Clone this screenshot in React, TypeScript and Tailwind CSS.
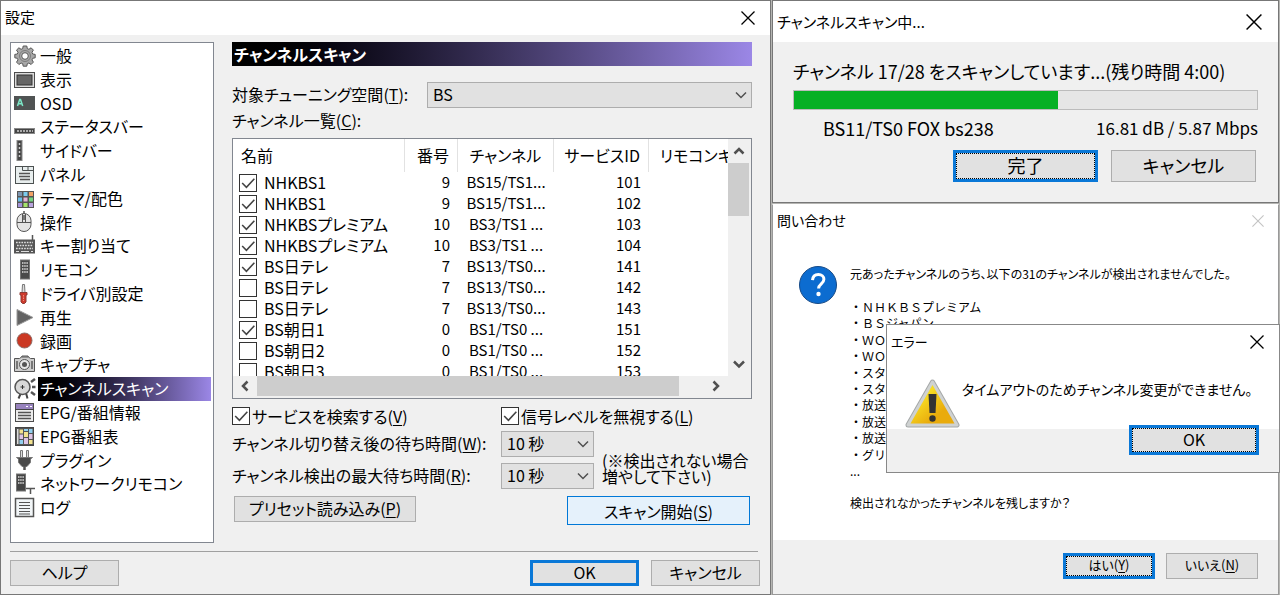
import { useState, type ReactNode } from "react";

const gray = "#555";

const icons: Record<string, ReactNode> = {
  general: (
    <>
      <g fill="#a8a8a8" stroke="#585858" strokeWidth="1">
        <path d="M9.2 1h3.6l.5 2.6 1.6.7 2.2-1.5 2.3 2.3-1.4 2.2.7 1.7 2.5.4v3.4l-2.5.5-.7 1.6 1.4 2.2-2.3 2.4-2.2-1.5-1.6.7-.5 2.5H9.2l-.5-2.5-1.6-.7-2.2 1.5-2.4-2.4L4 14.9l-.7-1.6-2.5-.5V9.4L3.300 9 4 7.300 2.500 5.100l2.400-2.300 2.200 1.500 1.600-.7z" />
        <circle cx="11" cy="11" r="3.300" fill="#fff" />
      </g>
      <circle cx="11" cy="11" r="5.500" fill="none" stroke="#7c7c7c" />
    </>
  ),
  display: (
    <>
      <rect x="0.500" y="3.500" width="20" height="15" fill="#dcdcdc" stroke="#4d4d4d" />
      <rect x="3" y="6" width="15" height="10" fill="#666" stroke="#333" />
    </>
  ),
  osd: (
    <>
      <rect x="0" y="4" width="21" height="14" fill="#505353" />
      <path d="M3.500 14 5.700 7.500h.8L8.700 14M4.500 11.800h3.200" fill="none" stroke="#7de8c8" strokeWidth="1.500" />
    </>
  ),
  statusbar: (
    <>
      <rect x="0.500" y="12.500" width="20" height="5" fill="#444" stroke="#8a8a8a" />
      <path d="M3 15h16" stroke="#ccc" strokeWidth="1.500" strokeDasharray="2 1" />
    </>
  ),
  sidebar: (
    <>
      <rect x="3" y="0.500" width="5" height="20" fill="#444" stroke="#888" />
      <path d="M5.500 3v16" stroke="#ccc" strokeWidth="1.500" strokeDasharray="2 2" />
    </>
  ),
  panel: (
    <>
      <rect x="1.500" y="2.500" width="18" height="17" fill="#e8eeee" stroke="#4c5151" />
      <path d="M8.500 2.500v4h11M14 3v3.500" fill="none" stroke="#4c5151" />
      <path d="M5 9.500h11M5 12.500h11M6 15.500h10" stroke={gray} strokeWidth="1.500" />
    </>
  ),
  theme: (
    <>
      <rect x="3" y="3" width="17" height="17" fill="#555" />
      <rect x="4" y="4" width="4" height="4" fill="#7e95b0" />
      <rect x="9.500" y="4" width="4" height="4" fill="#7ccbee" />
      <rect x="15" y="4" width="4" height="4" fill="#f3a266" />
      <rect x="4" y="9.500" width="4" height="4" fill="#68bde8" />
      <rect x="9.500" y="9.500" width="4" height="4" fill="#e6b4d6" />
      <rect x="15" y="9.500" width="4" height="4" fill="#74d480" />
      <rect x="4" y="15" width="4" height="4" fill="#a393d9" />
      <rect x="9.500" y="15" width="4" height="4" fill="#a5e46b" />
      <rect x="15" y="15" width="4" height="4" fill="#b9a4de" />
    </>
  ),
  mouse: (
    <>
      <path d="M10 3V0" stroke={gray} strokeWidth="1.500" />
      <rect x="3" y="2.500" width="14" height="18" rx="7" fill="#e4e4e4" stroke={gray} />
      <path d="M3 11.500h14M8.500 3v8M11.500 3v8" stroke={gray} />
      <path d="M10 4v5" stroke="#777" strokeWidth="2" />
    </>
  ),
  keyboard: (
    <>
      <path d="M18.500 5V0" stroke={gray} strokeWidth="1.500" />
      <rect x="0" y="4.500" width="21" height="14" fill="#555" />
      <path d="M2 7.500h17M3 10.500h16M2 13.500h17" stroke="#ddd" strokeWidth="1.700" strokeDasharray="1.700 1" />
      <path d="M2 16.500h3M7 16.500h8M17 16.500h2" stroke="#ddd" />
    </>
  ),
  remote: (
    <>
      <rect x="6.500" y="1" width="9" height="19" fill="#4a4a4a" stroke="#777" />
      <path d="M8 4h6M8 7h6M8 10h6M8 13h6" stroke="#ddd" strokeWidth="1.500" strokeDasharray="1.500 0.700" />
    </>
  ),
  driver: (
    <>
      <path d="M8.500 1.500h2l.5 8h-3z" fill="#ddd" stroke="#777" />
      <path d="M6 9.500h7v2.500h-1v7l-1.500 1.500h-2L7 19v-7H6z" fill="#ce3a2c" stroke="#8b3b35" />
      <path d="M9.500 12v6" stroke="#f08a7c" strokeDasharray="1.500 1" />
    </>
  ),
  play: <path d="M3 2.500v16L19 10.500z" fill="#636363" stroke="#999" />,
  record: <circle cx="10.500" cy="10.500" r="7.500" fill="#cb3823" stroke="#8f6b66" />,
  capture: (
    <>
      <path d="M7 4.500 8 2h6l1 2.500" fill="#ccc" stroke={gray} />
      <path d="M.5 4.500h5l2-1.500h7l2 1.500h4v13H.500z" fill="#ccc" stroke={gray} />
      <path d="M3 7v8M18 7v8" stroke="#777" strokeWidth="2" />
      <circle cx="10.500" cy="10.500" r="5" fill="#e8e8e8" stroke={gray} />
      <circle cx="10.500" cy="10.500" r="2.500" fill="#555" />
    </>
  ),
  scan: (
    <>
      <path d="m7 15-2.500 5.500M12 15l1.500 5.500" stroke="#444" strokeWidth="2" />
      <circle cx="8.500" cy="9" r="7.500" fill="#d9d9d9" stroke={gray} strokeWidth="1.500" />
      <path d="M6.500 9h4M8.500 7v4" stroke="#333" />
      <path d="m17 4 4-3M18 9h3.500M17 14l4 3" stroke={gray} strokeWidth="2.500" />
    </>
  ),
  epg: (
    <>
      <rect x="1.500" y="1.500" width="18" height="18" fill="#ececec" stroke="#4c4c4c" />
      <path d="M2 2h17v5H2z" fill="#9782bd" />
      <path d="M12 4.500h2M16 4.500h2" stroke="#fff" />
      <path d="M1 7.500h19" stroke="#444" />
      <path d="M4 10.500h13M4 13.500h13M4 16.500h13" stroke={gray} strokeWidth="1.500" />
    </>
  ),
  guide: (
    <>
      <rect x="1.500" y="1.500" width="18" height="18" fill="#555" stroke="#444" />
      <path d="M3 3h1.500v15H3z" fill="#ddd" />
      <path d="M5.500 3.500h3.500v4H5.500zM10 6h4v5h-4zM15 14h3.500v4H15z" fill="#f3e38f" />
      <path d="M10 3h4v2h-4zM5.500 14h3.500v4H5.500zM15 3h3.500v4H15z" fill="#91cfef" />
      <path d="M5.500 8.500h3.500v4.500H5.500zM10 12h4v6h-4zM15 8h3.500v5H15z" fill="#ddc4e6" />
    </>
  ),
  plugin: (
    <>
      <path d="M6.500 8V1.500h2V8M12.500 8V1.500h2V8" fill="#ddd" stroke="#777" />
      <path d="M2.500 8.500h16l-2 1.500v3.500l-3.500 4H8l-3.500-4V10z" fill="#4a4a4a" stroke="#777" />
      <path d="M10.500 17v4" stroke="#555" strokeWidth="2.500" />
    </>
  ),
  network: (
    <>
      <rect x="2.500" y="1" width="9" height="17" fill="#444" stroke="#777" />
      <path d="M4 4h6M4 7h6M4 10h6" stroke="#ddd" strokeWidth="1.500" strokeDasharray="1.500 0.700" />
      <path d="M12 15.500h9M16.500 15.500V21" stroke={gray} strokeWidth="1.500" />
    </>
  ),
  log: (
    <>
      <rect x="1.500" y="1.500" width="18" height="18" fill="#f2f6f8" stroke="#555" strokeWidth="1.500" />
      <path d="M5 5.500h11M5 8.500h11M5 11.500h11M5 14.500h11M5 17h11" stroke={gray} />
    </>
  ),
};

const pages = [
  ["general", "一般"],
  ["display", "表示"],
  ["osd", "OSD"],
  ["statusbar", "ステータスバー"],
  ["sidebar", "サイドバー"],
  ["panel", "パネル"],
  ["theme", "テーマ/配色"],
  ["mouse", "操作"],
  ["keyboard", "キー割り当て"],
  ["remote", "リモコン"],
  ["driver", "ドライバ別設定"],
  ["play", "再生"],
  ["record", "録画"],
  ["capture", "キャプチャ"],
  ["scan", "チャンネルスキャン"],
  ["epg", "EPG/番組情報"],
  ["guide", "EPG番組表"],
  ["plugin", "プラグイン"],
  ["network", "ネットワークリモコン"],
  ["log", "ログ"],
];

const channels = [
  { name: "NHKBS1", no: 9, ch: "BS15/TS1...", sid: 101, on: true },
  { name: "NHKBS1", no: 9, ch: "BS15/TS1...", sid: 102, on: true },
  { name: "NHKBSプレミアム", no: 10, ch: "BS3/TS1 ...", sid: 103, on: true },
  { name: "NHKBSプレミアム", no: 10, ch: "BS3/TS1 ...", sid: 104, on: true },
  { name: "BS日テレ", no: 7, ch: "BS13/TS0...", sid: 141, on: true },
  { name: "BS日テレ", no: 7, ch: "BS13/TS0...", sid: 142, on: false },
  { name: "BS日テレ", no: 7, ch: "BS13/TS0...", sid: 143, on: false },
  { name: "BS朝日1", no: 0, ch: "BS1/TS0 ...", sid: 151, on: true },
  { name: "BS朝日2", no: 0, ch: "BS1/TS0 ...", sid: 152, on: false },
  { name: "BS朝日3", no: 0, ch: "BS1/TS0 ...", sid: 153, on: false },
];

const missing = [
  "・ＮＨＫＢＳプレミアム",
  "・ＢＳジャパン",
  "・ＷＯ",
  "・ＷＯ",
  "・スター",
  "・スター",
  "・放送",
  "・放送",
  "・放送",
  "・グリー",
  "...",
];

function CloseButton({ size = 14, faded = false }: { size?: number; faded?: boolean }) {
  return (
    <button type="button" aria-label="閉じる" className={faded ? "text-[#c4c4c4]" : "text-black"}>
      <svg width={size} height={size} viewBox="0 0 14 14" fill="none" stroke="currentColor" strokeWidth="1.300">
        <path d="m.5.5 13 13M13.500.500l-13 13" />
      </svg>
    </button>
  );
}

function Chevron({ d, bold = false }: { d: string; bold?: boolean }) {
  return (
    <svg
      aria-hidden
      width="12"
      height="12"
      viewBox="0 0 12 12"
      fill="none"
      stroke="#505050"
      strokeWidth={bold ? 2.5 : 1.5}
    >
      <path d={d} />
    </svg>
  );
}

const UP = "M1.500 8.500 6 4l4.500 4.500";
const DOWN = "M1 3.500 6 8.500l5-5";
const LEFT = "M8.500 1.500 4 6l4.500 4.500";
const RIGHT = "M3.500 1.500 8 6l-4.500 4.500";

function Check({ defaultChecked }: { defaultChecked: boolean }) {
  return (
    <span className="grid size-[18px] shrink-0 place-items-center">
      <input
        type="checkbox"
        defaultChecked={defaultChecked}
        className="peer col-start-1 row-start-1 size-[18px] appearance-none border border-[#333] bg-white"
      />
      <svg
        aria-hidden
        viewBox="0 0 17 17"
        className="pointer-events-none invisible col-start-1 row-start-1 size-[18px] peer-checked:visible"
        fill="none"
        stroke="#444"
        strokeWidth="1.500"
      >
        <path d="m3 8.500 4 4 7.500-8" />
      </svg>
    </span>
  );
}

function Select({ id, options, className }: { id: string; options: string[]; className: string }) {
  return (
    <div className={`grid h-[26px] items-center ${className}`}>
      <select
        id={id}
        className="col-start-1 row-start-1 h-[26px] w-full appearance-none border border-[#adadad] bg-[#e1e1e1] px-[5px] pb-[2px] leading-5"
      >
        {options.map((o) => (
          <option key={o}>{o}</option>
        ))}
      </select>
      <span className="pointer-events-none col-start-1 row-start-1 mr-[5px] justify-self-end">
        <Chevron d={DOWN} />
      </span>
    </div>
  );
}

type ButtonProps = {
  children: ReactNode;
  className: string;
  primary?: boolean;
  focused?: boolean;
};

function Button({ children, className, primary = false, focused = false }: ButtonProps) {
  return (
    <button
      type="button"
      className={[
        "flex bg-[#e1e1e1]",
        primary ? "border-[3px] border-[#0a78d7]" : "border border-[#adadad]",
        className,
      ].join(" ")}
    >
      <span
        className={[
          "flex flex-1 items-center justify-center self-stretch",
          focused ? "border border-dotted border-black" : "",
        ].join(" ")}
      >
        <span className="pb-[2px] leading-5">{children}</span>
      </span>
    </button>
  );
}

function Key({ k }: { k: string }) {
  return (
    <>
      (<u className="underline-offset-2">{k}</u>)
    </>
  );
}

function PageList() {
  const [current, setCurrent] = useState("scan");

  return (
    <ul className="flex min-h-[501px] w-[204px] shrink-0 flex-col border border-[#828790] bg-white pt-px pr-[2px] pb-[22px] pl-[3px]">
      {pages.map(([id, label]) => (
        <li key={id} className="flex flex-1">
          <button
            type="button"
            onClick={() => setCurrent(id)}
            className="flex w-full items-center gap-[2px] text-left"
          >
            <svg aria-hidden viewBox="0 0 22 22" className="size-[22px] shrink-0">
              {icons[id]}
            </svg>
            <span
              className={[
                "flex-1 self-stretch pl-[2px] leading-[22px]",
                current === id ? "bg-linear-to-r from-black to-[#9b87e6] text-white" : "",
              ].join(" ")}
            >
              {label}
            </span>
          </button>
        </li>
      ))}
    </ul>
  );
}

function ChannelList() {
  const head = "border-r border-[#e2e2e2] px-2 pb-[2px] font-normal";

  return (
    <div className="mt-[6px] flex h-[261px] flex-col border border-[#828790] bg-[#f0f0f0] pr-[2px] pb-[2px]">
      <div className="flex min-h-0 flex-1">
        <div className="flex-1 overflow-hidden bg-white">
          <table aria-labelledby="channel-list" className="w-full table-fixed border-separate border-spacing-0">
            <thead>
              <tr className="h-[33px] whitespace-nowrap">
                <th className={`${head} text-left`}>名前</th>
                <th className={`${head} w-[53px] text-right`}>番号</th>
                <th className={`${head} w-[96px] text-center`}>チャンネル</th>
                <th className={`${head} w-[95px] text-right`}>サービスID</th>
                <th className="w-[79px] overflow-hidden pb-[2px] pl-[11px] text-left font-normal">
                  リモコンキー
                </th>
              </tr>
            </thead>
            <tbody>
              {channels.map((c) => (
                <tr key={c.sid} className="h-[21px] text-[15px] leading-[18px] whitespace-nowrap">
                  <td className="pl-[6px]">
                    <label className="flex items-center gap-[7px] text-base leading-[18px]">
                      <Check defaultChecked={c.on} />
                      <span className="pb-[2px]">{c.name}</span>
                    </label>
                  </td>
                  <td className="px-2 pb-[2px] text-right">{c.no}</td>
                  <td className="pb-[2px] text-center">{c.ch}</td>
                  <td className="px-2 pb-[2px] text-right">{c.sid}</td>
                  <td />
                </tr>
              ))}
            </tbody>
          </table>
        </div>
        <div className="flex w-[21px] flex-col">
          <button type="button" aria-label="上へ" className="flex h-6 items-center justify-center">
            <Chevron d={UP} bold />
          </button>
          <div className="h-[53px] bg-[#cdcdcd]" />
          <div className="flex-1" />
          <button type="button" aria-label="下へ" className="flex h-6 items-center justify-center">
            <Chevron d={DOWN} bold />
          </button>
        </div>
      </div>
      <div className="flex h-5 pr-[21px]">
        <button type="button" aria-label="左へ" className="flex w-6 items-center justify-center">
          <Chevron d={LEFT} bold />
        </button>
        <div className="w-[422px] bg-[#cdcdcd]" />
        <div className="flex-1" />
        <button type="button" aria-label="右へ" className="flex w-6 items-center justify-center">
          <Chevron d={RIGHT} bold />
        </button>
      </div>
    </div>
  );
}

function SettingsWindow() {
  return (
    <section className="border border-[#777] bg-[#f0f0f0] text-base">
      <header className="flex h-[34px] items-center justify-between bg-white pr-[15px] pl-1 text-[15px]">
        <h1 className="pb-[2px]">設定</h1>
        <CloseButton />
      </header>
      <div className="pt-[7px] pr-[10px] pb-2 pl-[9px]">
        <div className="flex gap-[18px] pr-2">
          <PageList />
          <div className="min-w-0 flex-1">
            <h2 className="h-6 bg-linear-to-r from-black to-[#9b87e6] pl-[2px] leading-6 font-bold text-white">
              チャンネルスキャン
            </h2>
            <div className="mt-4 flex items-center">
              <label htmlFor="space" className="w-[195px] pb-[2px] whitespace-nowrap">
                対象チューニング空間
                <Key k="T" />:
              </label>
              <Select id="space" options={["BS"]} className="flex-1" />
            </div>
            <p id="channel-list" className="mt-[2px] pb-[2px] leading-5">
              チャンネル一覧
              <Key k="C" />:
            </p>
            <ChannelList />
            <div className="mt-2 grid grid-cols-[269px_93px_1fr] items-center gap-y-[6px] whitespace-nowrap">
              <label className="flex items-center gap-[2px] leading-[18px]">
                <Check defaultChecked />
                <span>
                  サービスを検索する
                  <Key k="V" />
                </span>
              </label>
              <label className="col-span-2 flex items-center gap-[2px] leading-[18px]">
                <Check defaultChecked />
                <span>
                  信号レベルを無視する
                  <Key k="L" />
                </span>
              </label>
              <label htmlFor="wait" className="pb-[2px] leading-6">
                チャンネル切り替え後の待ち時間
                <Key k="W" />:
              </label>
              <Select id="wait" options={["10 秒"]} className="w-full" />
              <p className="row-span-2 pt-4 pl-2 leading-4">
                (※検出されない場合
                <br />
                増やして下さい)
              </p>
              <label htmlFor="max-wait" className="pb-[2px] leading-6">
                チャンネル検出の最大待ち時間
                <Key k="R" />:
              </label>
              <Select id="max-wait" options={["10 秒"]} className="w-full" />
            </div>
            <div className="mt-[7px] flex items-start justify-between px-[2px]">
              <Button className="h-[26px] w-[182px]">
                プリセット読み込み
                <Key k="P" />
              </Button>
              <button type="button" className="h-[29px] w-[183px] border border-[#0078d7] bg-[#e5f1fb] leading-5">
                スキャン開始
                <Key k="S" />
              </button>
            </div>
          </div>
        </div>
        <hr className="mt-2 mr-[2px] border-[#a0a0a0]" />
        <footer className="mt-2 flex gap-3">
          <Button className="mr-auto h-[26px] w-[109px]">ヘルプ</Button>
          <Button primary className="h-[26px] w-[109px]">
            OK
          </Button>
          <Button className="h-[26px] w-[109px]">キャンセル</Button>
        </footer>
      </div>
    </section>
  );
}

function ScanDialog() {
  const done = 57;

  return (
    <section className="border border-[#777] bg-[#f0f0f0] text-lg">
      <header className="flex h-[41px] items-center justify-between bg-white pr-4 pl-1 text-[15px]">
        <h2>チャンネルスキャン中...</h2>
        <CloseButton size={16} />
      </header>
      <div className="px-5 pt-[17px] pb-5">
        <p className="leading-6 whitespace-nowrap">
          チャンネル 17/28 をスキャンしています...(残り時間 4:00)
        </p>
        <div
          role="progressbar"
          aria-label="スキャンの進行状況"
          aria-valuenow={done}
          className="mt-[7px] h-5 border border-[#bcbcbc] bg-[#e6e6e6]"
        >
          <div className="h-full bg-[#06b025]" style={{ width: `${done}%` }} />
        </div>
        <p className="mt-[7px] flex justify-between pb-px pl-[30px] leading-[22px] whitespace-nowrap">
          <span>BS11/TS0 FOX bs238</span>
          <span className="text-[17px]">16.81 dB / 5.87 Mbps</span>
        </p>
        <div className="mt-[10px] flex justify-end gap-[13px] pr-[2px]">
          <Button primary focused className="h-8 w-[145px]">
            完了
          </Button>
          <Button className="h-8 w-[145px]">キャンセル</Button>
        </div>
      </div>
    </section>
  );
}

function QuestionDialog() {
  return (
    <section className="mt-px flex flex-1 flex-col border border-[#999] border-t-white bg-white text-xs">
      <header className="flex h-[31px] items-center justify-between pr-[14px] pl-1 text-sm">
        <h2 className="pb-[2px]">問い合わせ</h2>
        <CloseButton faded size={12} />
      </header>
      <div className="flex gap-[13px] pt-[30px] pb-[29px] pl-[26px]">
        <svg aria-hidden viewBox="0 0 38 38" className="size-[38px] shrink-0">
          <circle cx="19" cy="19" r="18.500" fill="#0c6cd0" stroke="#174a86" />
          <path
            d="M13.500 14.200c.3-3.700 2.600-5.700 5.900-5.700 3.200 0 5.500 1.800 5.500 4.800 0 4.500-5.300 4.700-5.300 9.200"
            fill="none"
            stroke="#fff"
            strokeWidth="3"
          />
          <circle cx="19.500" cy="28" r="2.200" fill="#fff" />
        </svg>
        <div className="leading-4 whitespace-nowrap">
          <p>元あったチャンネルのうち、以下の31のチャンネルが検出されませんでした。</p>
          <ul className="mt-[17px] flex h-[180px] flex-col justify-between [font-feature-settings:normal]">
            {missing.map((m, i) => (
              <li key={i}>{m}</li>
            ))}
          </ul>
          <p className="mt-4">検出されなかったチャンネルを残しますか？</p>
        </div>
      </div>
      <footer className="flex flex-1 items-start justify-end gap-[11px] bg-[#f0f0f0] pt-[13px] pr-5 pb-[13px] text-[13px]">
        <Button primary focused className="h-[26px] w-[92px]">
          はい
          <Key k="Y" />
        </Button>
        <Button className="h-[26px] w-[92px]">
          いいえ
          <Key k="N" />
        </Button>
      </footer>
    </section>
  );
}

function ErrorDialog() {
  return (
    <section
      role="alertdialog"
      aria-labelledby="error-title"
      className="absolute right-0 bottom-[122px] w-[394px] border border-[#888] bg-white text-base"
    >
      <header className="flex h-[34px] items-center justify-between pr-[15px] pl-1 text-[13px]">
        <h2 id="error-title">エラー</h2>
        <CloseButton />
      </header>
      <div className="flex h-[70px] items-start gap-[2px] pt-5 pl-[18px]">
        <svg aria-hidden viewBox="0 0 55 50" className="h-[50px] w-[55px] shrink-0">
          <defs>
            <linearGradient id="warn" x1="0" y1="0" x2="1" y2="1">
              <stop offset="0.300" stopColor="#f7dc22" />
              <stop offset="0.700" stopColor="#e9ab0c" />
            </linearGradient>
          </defs>
          <path
            d="M27.500 3 52 46H3z"
            fill="#b9bcbc"
            stroke="#a5a8a8"
            strokeWidth="5"
            strokeLinejoin="round"
          />
          <path d="M27.500 3 52 46H3z" fill="#c9cccc" stroke="#cfd2d2" strokeWidth="3" strokeLinejoin="round" />
          <path d="M27.500 6 49.500 44.500H5.500z" fill="url(#warn)" />
          <path d="M23.500 15h8l-1 19h-6z" fill="#333" />
          <circle cx="27.500" cy="39.500" r="3.200" fill="#333" />
        </svg>
        <p className="text-sm leading-5 whitespace-nowrap">タイムアウトのためチャンネル変更ができません。</p>
      </div>
      <footer className="flex h-[43px] justify-end bg-[#f0f0f0] pr-5">
        <Button primary focused className="-mt-1 h-[30px] w-[130px]">
          OK
        </Button>
      </footer>
    </section>
  );
}

export default function App() {
  return (
    <main className="grid min-h-screen grid-cols-[771fr_509fr] bg-[#b5b5b2] font-['Noto_Sans_CJK_JP',sans-serif] text-black [font-feature-settings:'palt']">
      <SettingsWindow />
      <div className="relative flex flex-col pr-px pl-px">
        <ScanDialog />
        <QuestionDialog />
        <ErrorDialog />
      </div>
    </main>
  );
}
